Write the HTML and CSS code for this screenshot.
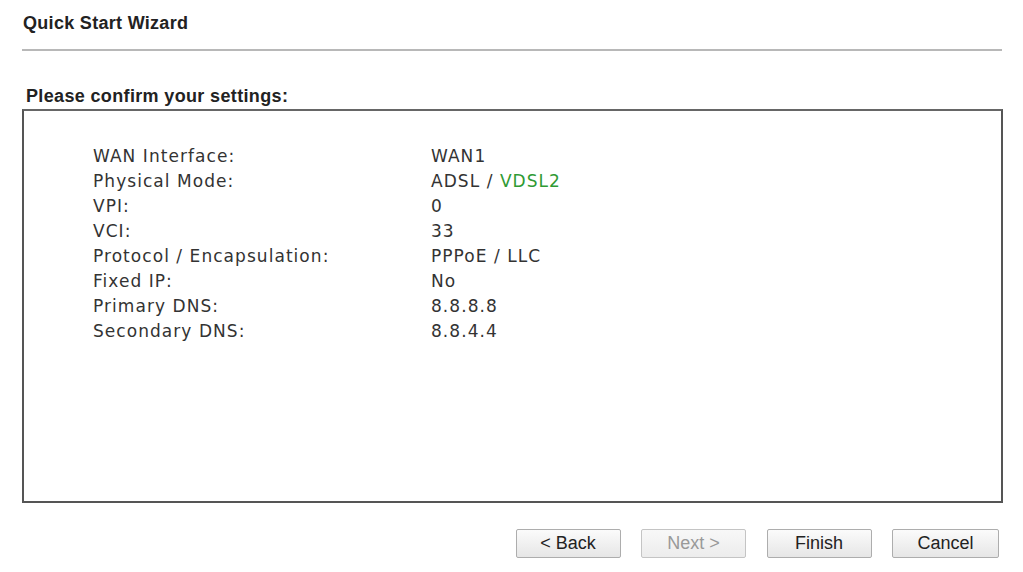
FILE: index.html
```html
<!DOCTYPE html>
<html>
<head>
<meta charset="utf-8">
<link rel="stylesheet" href="styles.css">
</head>
<body>
<div class="page">
  <h1 class="title">Quick Start Wizard</h1>
  <div class="rule"></div>
  <h2 class="subtitle">Please confirm your settings:</h2>
  <div class="box">
    <div class="grid">
      <div class="lbl">WAN Interface:</div><div class="val">WAN1</div>
      <div class="lbl">Physical Mode:</div><div class="val">ADSL / <span class="green">VDSL2</span></div>
      <div class="lbl">VPI:</div><div class="val">0</div>
      <div class="lbl">VCI:</div><div class="val">33</div>
      <div class="lbl">Protocol / Encapsulation:</div><div class="val">PPPoE / LLC</div>
      <div class="lbl">Fixed IP:</div><div class="val">No</div>
      <div class="lbl">Primary DNS:</div><div class="val">8.8.8.8</div>
      <div class="lbl">Secondary DNS:</div><div class="val">8.8.4.4</div>
    </div>
  </div>
  <div class="buttons">
    <button class="btn">&lt; Back</button>
    <button class="btn disabled">Next &gt;</button>
    <button class="btn">Finish</button>
    <button class="btn wide">Cancel</button>
  </div>
</div>
</body>
</html>
```
FILE: styles.css
```css
html, body {
  margin: 0;
  padding: 0;
  background: #fff;
}
.page {
  width: 980px;
  padding: 12px 0 0 22px;
  font-family: "Liberation Sans", Arial, sans-serif;
}
.title {
  margin: 0 0 0 1px;
  font-size: 18px;
  letter-spacing: 0.3px;
  font-weight: bold;
  color: #222;
  line-height: 22px;
}
.rule {
  margin-top: 15px;
  height: 0;
  border-top: 2px solid #b8b8b8;
  width: 980px;
}
.subtitle {
  margin: 35px 0 0 4px;
  font-size: 18px;
  letter-spacing: 0.35px;
  font-weight: bold;
  color: #222;
  line-height: 20px;
}
.box {
  margin-top: 3px;
  box-sizing: border-box;
  width: 981px;
  height: 394px;
  border: 2px solid #555;
  border-top-color: #666;
  padding: 33px 0 0 69px;
}
.grid {
  display: grid;
  grid-template-columns: 338px auto;
  grid-auto-rows: 25px;
  font-family: "DejaVu Sans", Verdana, sans-serif;
  font-size: 17px;
  letter-spacing: 1.05px;
  color: #333;
  line-height: 25px;
}
.green {
  color: #2f9a34;
}
.buttons {
  display: flex;
  justify-content: flex-end;
  gap: 20.5px;
  margin-top: 26px;
  width: 977px;
}
.btn {
  width: 105px;
  height: 29px;
  font-family: "Liberation Sans", Arial, sans-serif;
  font-size: 18px;
  color: #222;
  background: linear-gradient(#fbfbfb, #e6e6e6);
  border: 1px solid #adadad;
  border-radius: 2px;
  padding: 0;
}
.btn.wide {
  width: 107px;
}
.btn.disabled {
  color: #999;
  background: linear-gradient(#f8f8f8, #ececec);
  border-color: #c4c4c4;
}
```
